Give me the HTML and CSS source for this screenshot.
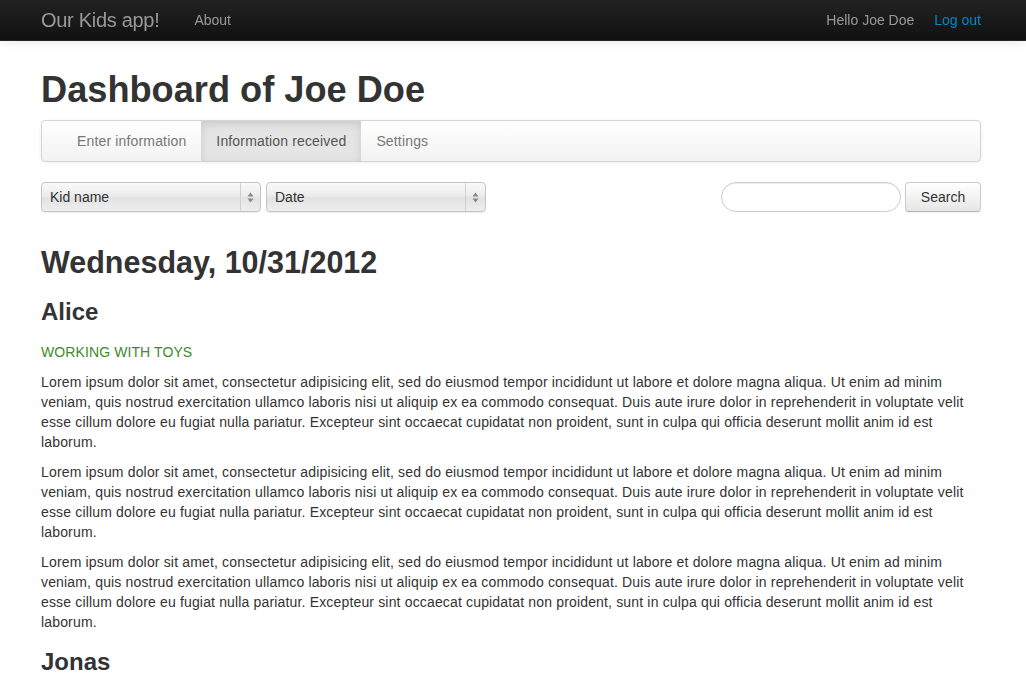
FILE: index.html
```html
<!DOCTYPE html>
<html>
<head>
<meta charset="utf-8">
<link rel="stylesheet" href="styles.css">
</head>
<body>
<header class="topbar">
  <div class="container topbar-inner">
    <a class="brand">Our Kids app!</a>
    <a class="top-link">About</a>
    <div class="top-right">
      <span class="hello">Hello Joe Doe</span>
      <a class="logout">Log out</a>
    </div>
  </div>
</header>
<main class="container">
  <h1>Dashboard of Joe Doe</h1>
  <nav class="tabs">
    <a class="tab">Enter information</a>
    <a class="tab active">Information received</a>
    <a class="tab">Settings</a>
  </nav>
  <div class="filters">
    <div class="select"><span class="select-label">Kid name</span><span class="select-arrows"><svg width="7" height="11" viewBox="0 0 7 11"><path d="M3.5 0.5 L6.5 4.5 L0.5 4.5 Z M3.5 10.5 L6.5 6.5 L0.5 6.5 Z" fill="#888"/></svg></span></div>
    <div class="select"><span class="select-label">Date</span><span class="select-arrows"><svg width="7" height="11" viewBox="0 0 7 11"><path d="M3.5 0.5 L6.5 4.5 L0.5 4.5 Z M3.5 10.5 L6.5 6.5 L0.5 6.5 Z" fill="#888"/></svg></span></div>
    <div class="search">
      <input class="search-input" type="text">
      <button class="btn">Search</button>
    </div>
  </div>
  <h2>Wednesday, 10/31/2012</h2>
  <h3>Alice</h3>
  <p class="status">WORKING WITH TOYS</p>
  <p>Lorem ipsum dolor sit amet, consectetur adipisicing elit, sed do eiusmod tempor incididunt ut labore et dolore magna aliqua. Ut enim ad minim veniam, quis nostrud exercitation ullamco laboris nisi ut aliquip ex ea commodo consequat. Duis aute irure dolor in reprehenderit in voluptate velit esse cillum dolore eu fugiat nulla pariatur. Excepteur sint occaecat cupidatat non proident, sunt in culpa qui officia deserunt mollit anim id est laborum.</p>
  <p>Lorem ipsum dolor sit amet, consectetur adipisicing elit, sed do eiusmod tempor incididunt ut labore et dolore magna aliqua. Ut enim ad minim veniam, quis nostrud exercitation ullamco laboris nisi ut aliquip ex ea commodo consequat. Duis aute irure dolor in reprehenderit in voluptate velit esse cillum dolore eu fugiat nulla pariatur. Excepteur sint occaecat cupidatat non proident, sunt in culpa qui officia deserunt mollit anim id est laborum.</p>
  <p>Lorem ipsum dolor sit amet, consectetur adipisicing elit, sed do eiusmod tempor incididunt ut labore et dolore magna aliqua. Ut enim ad minim veniam, quis nostrud exercitation ullamco laboris nisi ut aliquip ex ea commodo consequat. Duis aute irure dolor in reprehenderit in voluptate velit esse cillum dolore eu fugiat nulla pariatur. Excepteur sint occaecat cupidatat non proident, sunt in culpa qui officia deserunt mollit anim id est laborum.</p>
  <h3>Jonas</h3>
</main>
</body>
</html>
```
FILE: styles.css
```css
* { box-sizing: border-box; }
html, body { margin: 0; padding: 0; }
body {
  font-family: "Liberation Sans", Arial, sans-serif;
  font-size: 14px;
  line-height: 20px;
  color: #333;
  background: #fff;
  padding-top: 60px;
  letter-spacing: 0.16px;
}
a { text-decoration: none; cursor: pointer; }
.container { width: 940px; margin-left: 41px; }

.topbar {
  position: fixed;
  top: 0; left: 0; right: 0;
  height: 41px;
  background: linear-gradient(#222222, #111111);
  border-bottom: 1px solid #252525;
  box-shadow: 0 1px 10px rgba(0,0,0,0.1);
  z-index: 10;
}
.topbar-inner { display: flex; align-items: center; height: 40px; }
.brand { font-size: 20px; font-weight: normal; color: #999; line-height: 40px; padding-right: 20px; letter-spacing: -0.3px; }
.top-link { color: #999; padding: 0 15px; line-height: 40px; letter-spacing: 0; }
.top-right { margin-left: auto; display: flex; gap: 20px; line-height: 40px; letter-spacing: 0; }
.hello { color: #999; }
.logout { color: #0088cc; }

h1 { font-size: 36.2px; line-height: 40px; margin: 10px 0; font-weight: bold; letter-spacing: 0; }
h2 { font-size: 30.5px; line-height: 40px; margin: 10px 0; font-weight: bold; letter-spacing: 0; }
h3 { font-size: 24px; line-height: 40px; margin: 10px 0; font-weight: bold; letter-spacing: 0; }
p { margin: 0 0 10px; }
.status { color: #3d8a2a; letter-spacing: 0.1px; }

.tabs {
  display: flex;
  height: 42px;
  padding: 0 20px;
  background: linear-gradient(#ffffff, #f2f2f2);
  border: 1px solid #d4d4d4;
  border-radius: 4px;
  box-shadow: 0 1px 4px rgba(0,0,0,0.065);
  margin-bottom: 20px;
}
.tab { color: #777; padding: 10px 15px; line-height: 20px; }
.tab.active { background: #e5e5e5; color: #555; box-shadow: inset 0 3px 8px rgba(0,0,0,0.125); }

.filters { display: flex; align-items: center; gap: 5px; margin-bottom: 30px; height: 30px; }
.select {
  width: 220px; height: 30px;
  display: flex; align-items: stretch;
  border: 1px solid #c4c4c4;
  border-radius: 4px;
  background: linear-gradient(#fafafa, #ececec 45%, #e2e2e2 55%, #efefef);
  box-shadow: 0 1px 1px rgba(0,0,0,0.08);
  color: #333;
  letter-spacing: 0;
}
.select-label { flex: 1; padding-left: 8px; line-height: 28px; }
.select-arrows { width: 20px; border-left: 1px solid #d0d0d0; display: flex; align-items: center; justify-content: center; }
.search { margin-left: auto; display: flex; gap: 4px; }
.search-input {
  width: 180px; height: 30px;
  border: 1px solid #ccc;
  border-radius: 15px;
  box-shadow: inset 0 1px 1px rgba(0,0,0,0.075);
  outline: none;
  padding: 4px 14px;
  font: inherit;
}
.btn {
  width: 76px; height: 30px;
  font: inherit; color: #333;
  background: linear-gradient(#ffffff, #e6e6e6);
  border: 1px solid #cccccc;
  border-bottom-color: #b3b3b3;
  border-radius: 4px;
  box-shadow: inset 0 1px 0 rgba(255,255,255,0.2), 0 1px 2px rgba(0,0,0,0.05);
  padding: 0;
}
```
